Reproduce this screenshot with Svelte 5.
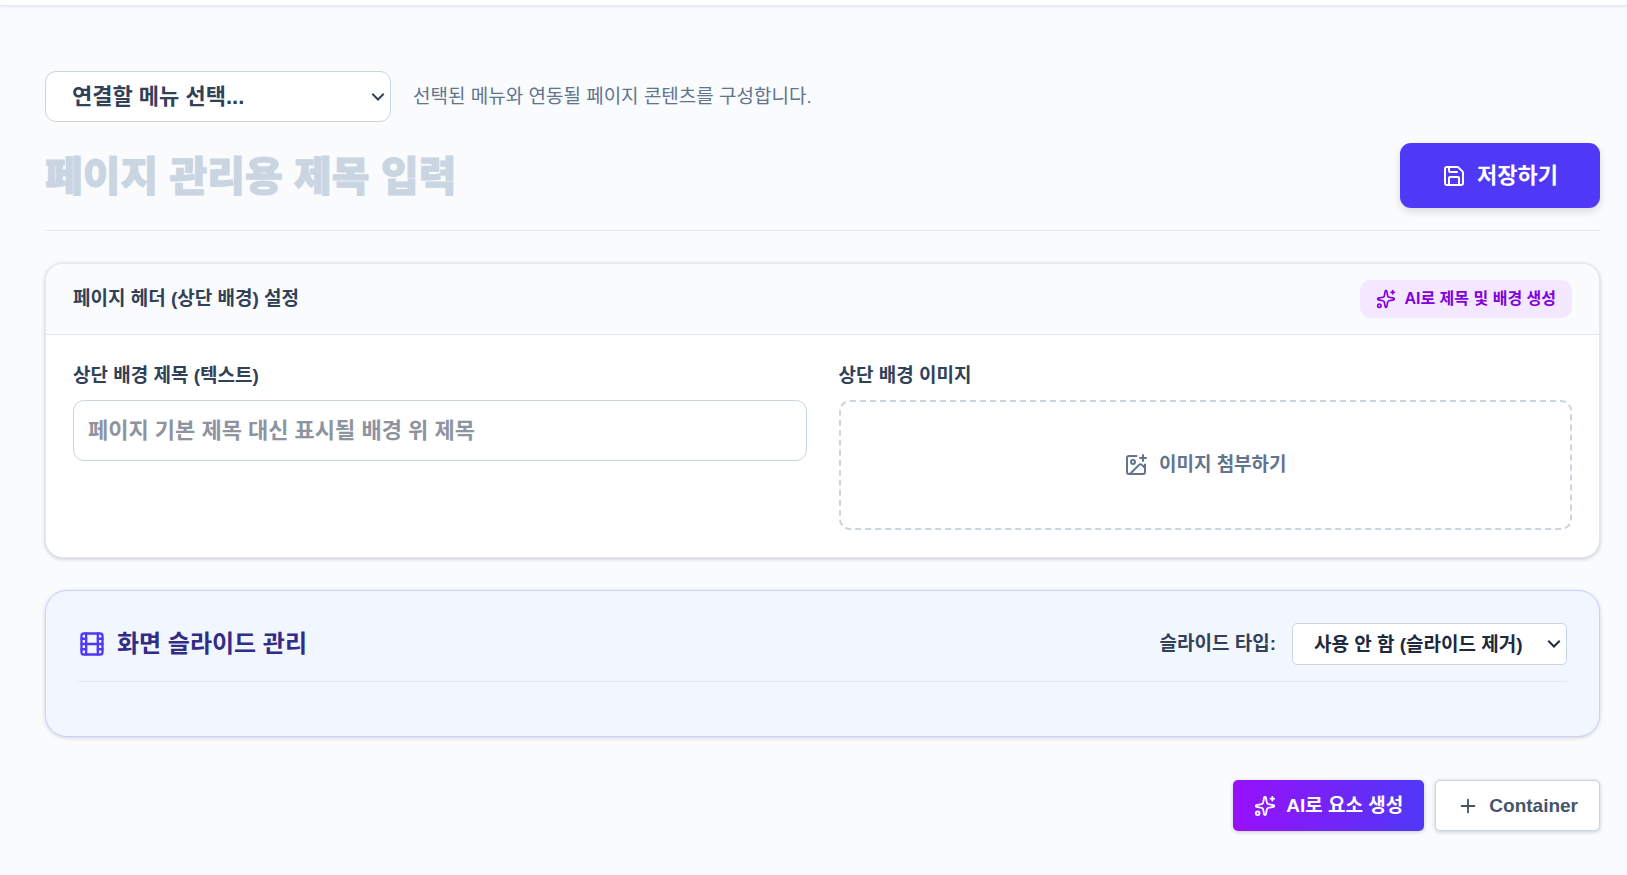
<script lang="ts">
	let menu = $state('');
	let pageTitle = $state('');
	let headerTitle = $state('');
	let slideType = $state('none');
	let fileInput: HTMLInputElement;
</script>

{#snippet sparkles()}
	<svg class="icon" viewBox="0 0 24 24" aria-hidden="true">
		<path
			d="M11.017 2.814a1 1 0 0 1 1.966 0l1.051 5.558a2 2 0 0 0 1.594 1.594l5.558 1.051a1 1 0 0 1 0 1.966l-5.558 1.051a2 2 0 0 0-1.594 1.594l-1.051 5.558a1 1 0 0 1-1.966 0l-1.051-5.558a2 2 0 0 0-1.594-1.594l-5.558-1.051a1 1 0 0 1 0-1.966l5.558-1.051a2 2 0 0 0 1.594-1.594z"
		/>
		<path d="M20 2v4" />
		<path d="M22 4h-4" />
		<circle cx="4" cy="20" r="2" />
	</svg>
{/snippet}

{#snippet chevron()}
	<svg class="chevron" viewBox="0 0 14 14" aria-hidden="true">
		<path d="M2 4.5l5 5 5-5" />
	</svg>
{/snippet}

<div class="topbar"></div>

<main class="page">
	<header class="page-header">
		<div class="menu-row">
			<div class="select-wrap menu-select">
				<select aria-label="연결할 메뉴 선택" bind:value={menu}>
					<option value="">연결할 메뉴 선택...</option>
				</select>
				{@render chevron()}
			</div>
			<p class="hint">선택된 메뉴와 연동될 페이지 콘텐츠를 구성합니다.</p>
		</div>
		<div class="title-row">
			<input
				class="title-input"
				type="text"
				placeholder="페이지 관리용 제목 입력"
				aria-label="페이지 관리용 제목"
				bind:value={pageTitle}
			/>
			<button class="btn save" type="button">
				<svg class="icon" viewBox="0 0 24 24" aria-hidden="true">
					<path
						d="M15.2 3a2 2 0 0 1 1.4.6l3.8 3.8a2 2 0 0 1 .6 1.4V19a2 2 0 0 1-2 2H5a2 2 0 0 1-2-2V5a2 2 0 0 1 2-2z"
					/>
					<path d="M17 21v-7a1 1 0 0 0-1-1H8a1 1 0 0 0-1 1v7" />
					<path d="M7 3v4a1 1 0 0 0 1 1h7" />
				</svg>
				저장하기
			</button>
		</div>
	</header>

	<section class="card">
		<div class="card-head">
			<h2>페이지 헤더 (상단 배경) 설정</h2>
			<button class="btn ai-header" type="button">
				{@render sparkles()}
				AI로 제목 및 배경 생성
			</button>
		</div>
		<div class="card-body">
			<div class="field">
				<label for="header-title">상단 배경 제목 (텍스트)</label>
				<input
					id="header-title"
					class="text-input"
					type="text"
					placeholder="페이지 기본 제목 대신 표시될 배경 위 제목"
					bind:value={headerTitle}
				/>
			</div>
			<div class="field">
				<label for="header-image">상단 배경 이미지</label>
				<input id="header-image" type="file" accept="image/*" hidden bind:this={fileInput} />
				<button class="btn dropzone" type="button" onclick={() => fileInput.click()}>
					<svg class="icon" viewBox="0 0 24 24" aria-hidden="true">
						<path d="M16 5h6" />
						<path d="M19 2v6" />
						<path d="M21 11.5V19a2 2 0 0 1-2 2H5a2 2 0 0 1-2-2V5a2 2 0 0 1 2-2h7.5" />
						<path d="m21 15-3.086-3.086a2 2 0 0 0-2.828 0L6 21" />
						<circle cx="9" cy="9" r="2" />
					</svg>
					이미지 첨부하기
				</button>
			</div>
		</div>
	</section>

	<section class="slides">
		<div class="slides-head">
			<h2>
				<svg class="icon" viewBox="0 0 24 24" aria-hidden="true">
					<rect width="18" height="18" x="3" y="3" rx="2" />
					<path d="M7 3v18" />
					<path d="M3 7.5h4" />
					<path d="M3 12h18" />
					<path d="M3 16.5h4" />
					<path d="M17 3v18" />
					<path d="M17 7.5h4" />
					<path d="M17 16.5h4" />
				</svg>
				화면 슬라이드 관리
			</h2>
			<div class="slide-type">
				<label for="slide-type">슬라이드 타입:</label>
				<div class="select-wrap">
					<select id="slide-type" bind:value={slideType}>
						<option value="none">사용 안 함 (슬라이드 제거)</option>
					</select>
					{@render chevron()}
				</div>
			</div>
		</div>
	</section>

	<div class="actions">
		<button class="btn ai-element" type="button">
			{@render sparkles()}
			AI로 요소 생성
		</button>
		<button class="btn container-btn" type="button">
			<svg class="icon" viewBox="0 0 24 24" aria-hidden="true">
				<path d="M5 12h14" />
				<path d="M12 5v14" />
			</svg>
			Container
		</button>
	</div>
</main>

<style>
	:global(body) {
		background: #f9fbfd;
		color: #1d293d;
		font-family: 'Liberation Sans', 'Noto Sans CJK KR', sans-serif;
		font-size: 19px;
	}

	:global(*) {
		box-sizing: border-box;
	}

	h2,
	p {
		margin: 0;
	}

	h2 {
		font-size: 19px;
		line-height: 28px;
	}

	input,
	select,
	button {
		font-family: inherit;
	}

	.topbar {
		height: 6px;
		background: #fff;
		border-bottom: 1px solid #e2e8f0;
		box-shadow: 0 1px 3px rgba(0, 0, 0, 0.08);
	}

	.page {
		padding: 65px 27px 43px 45px;
	}

	.icon {
		width: 22px;
		height: 22px;
		flex-shrink: 0;
		fill: none;
		stroke: currentColor;
		stroke-width: 2;
		stroke-linecap: round;
		stroke-linejoin: round;
	}

	.btn {
		display: flex;
		align-items: center;
		justify-content: center;
		border: none;
		font-weight: 700;
		line-height: 26px;
		white-space: nowrap;
		cursor: pointer;
	}

	.select-wrap {
		display: grid;
		align-items: center;
		width: 275px;
		color: #1d293d;
	}

	.select-wrap > :global(*) {
		grid-area: 1 / 1;
	}

	.select-wrap select {
		appearance: none;
		width: 100%;
		height: 42px;
		padding: 0 21px;
		border: 1px solid #cad5e2;
		border-radius: 5px;
		background-color: #fff;
		color: inherit;
		font-size: 19px;
		font-weight: 700;
	}

	.menu-select {
		width: 346px;
		color: #314158;
	}

	.menu-select select {
		height: 51px;
		padding: 0 26px;
		border-radius: 11px;
		font-size: 22px;
	}

	.chevron {
		justify-self: end;
		width: 14px;
		height: 14px;
		margin-right: 6px;
		fill: none;
		stroke: currentColor;
		stroke-width: 2;
		stroke-linecap: square;
		pointer-events: none;
	}

	.page-header {
		display: flex;
		flex-direction: column;
		gap: 21px;
		padding-bottom: 22px;
		border-bottom: 1px solid #e2e8f0;
		margin-bottom: 32px;
	}

	.menu-row {
		display: flex;
		align-items: center;
		gap: 22px;
	}

	.hint {
		color: #62748e;
		font-size: 19px;
		line-height: 26px;
	}

	.title-row {
		display: flex;
		align-items: center;
		justify-content: space-between;
		gap: 22px;
	}

	.title-input {
		flex: 1;
		min-width: 0;
		height: 65px;
		padding: 4px 0 0;
		border: none;
		outline: none;
		background: transparent;
		color: #0f172b;
		font-size: 41px;
		font-weight: 900;
		-webkit-text-stroke: 1px currentColor;
	}

	.title-input::placeholder {
		color: #cad5e2;
	}

	.save {
		gap: 11px;
		height: 65px;
		padding: 0 42px;
		border-radius: 11px;
		background: #4f39f6;
		color: #fff;
		font-size: 22px;
		box-shadow: 0 4px 8px rgba(0, 0, 0, 0.12);
	}

	.save .icon,
	.dropzone .icon {
		width: 24px;
		height: 24px;
	}

	.card {
		border: 1px solid #e2e8f0;
		border-radius: 18px;
		background: #fff;
		overflow: hidden;
		box-shadow: 0 1px 4px rgba(0, 0, 0, 0.2);
	}

	.card-head {
		display: flex;
		align-items: center;
		justify-content: space-between;
		padding: 16px 27px;
		border-bottom: 1px solid #e2e8f0;
		background: #f9fbfd;
		color: #314158;
	}

	.ai-header {
		gap: 8px;
		height: 38px;
		padding: 0 16px;
		border-radius: 11px;
		background: #f3e8ff;
		color: #8200db;
		font-size: 16px;
	}

	.ai-header :global(.icon) {
		width: 20px;
		height: 20px;
	}

	.card-body {
		display: grid;
		grid-template-columns: 1fr 1fr;
		gap: 32px;
		padding: 27px;
	}

	.field {
		display: flex;
		flex-direction: column;
		gap: 10px;
	}

	label {
		color: #314158;
		font-size: 19px;
		font-weight: 700;
		line-height: 28px;
	}

	.text-input {
		height: 61px;
		padding: 0 14px;
		border: 1px solid #cad5e2;
		border-radius: 11px;
		background: #fff;
		color: #1d293d;
		font-size: 22px;
		font-weight: 700;
	}

	.text-input::placeholder {
		color: #8e949f;
	}

	.dropzone {
		gap: 11px;
		height: 130px;
		border: 2px dashed #cad5e2;
		border-radius: 11px;
		background: #fff;
		color: #62748e;
		font-size: 19px;
	}

	.slides {
		margin-top: 32px;
		padding: 32px 32px 54px;
		border: 1px solid #c6d2ff;
		border-radius: 22px;
		background: #f2f6ff;
		box-shadow: 0 1px 4px rgba(0, 0, 0, 0.16);
	}

	.slides-head {
		display: flex;
		align-items: center;
		justify-content: space-between;
		padding-bottom: 16px;
		border-bottom: 1px solid #e0e7ff;
	}

	.slides h2 {
		display: flex;
		align-items: center;
		gap: 11px;
		color: #312c85;
		font-size: 24px;
	}

	.slides h2 .icon {
		width: 28px;
		height: 28px;
		color: #4f39f6;
	}

	.slide-type {
		display: flex;
		align-items: center;
		gap: 16px;
	}

	.actions {
		display: flex;
		justify-content: flex-end;
		gap: 11px;
		margin-top: 43px;
	}

	.actions .btn {
		gap: 10px;
		height: 51px;
		padding: 0 21px;
		border-radius: 5px;
		font-size: 19px;
		box-shadow: 0 1px 4px rgba(0, 0, 0, 0.2);
	}

	.actions .ai-element {
		background: linear-gradient(to right, #9810fa, #4f39f6);
		color: #fff;
	}

	.actions .container-btn {
		border: 1px solid #cad5e2;
		background: #fff;
		color: #45556c;
	}
</style>
